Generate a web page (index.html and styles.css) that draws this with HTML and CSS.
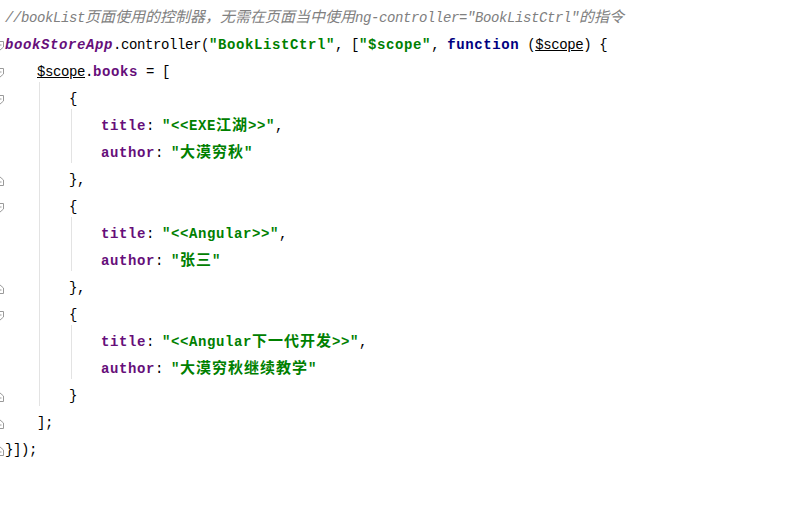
FILE: index.html
```html
<!DOCTYPE html>
<html lang="zh-CN">
<head>
    <meta charset="UTF-8">
    <meta name="viewport" content="width=device-width, initial-scale=1.0">
    <title>app.js</title>
    <link rel="stylesheet" href="styles.css">
</head>
<body>
    <div class="editor">
        <!-- line 1 -->
        <div class="ln">
            <span class="fold"></span>
            <span class="src"><span class="comment">//bookList<span class="cn">页面使用的控制器，无需在页面当中使用</span>ng-controller="BookListCtrl"<span class="cn">的指令</span></span></span>
        </div>
        <!-- line 2 -->
        <div class="ln">
            <span class="fold"><svg width="10" height="10" viewBox="0 0 10 10"><path class="fold-shape" d="M0.5 0.5H8.5V6L4.5 9.5L0.5 6Z"/><path class="fold-minus" d="M2.5 4H6.5"/></svg></span>
            <span class="src"><span class="global">bookStoreApp</span>.controller(<span class="str">"BookListCtrl"</span>, [<span class="str">"$scope"</span>, <span class="kw">function</span> (<span class="param">$scope</span>) {</span>
        </div>
        <!-- line 3 -->
        <div class="ln">
            <span class="fold"><svg width="10" height="10" viewBox="0 0 10 10"><path class="fold-shape" d="M0.5 0.5H8.5V6L4.5 9.5L0.5 6Z"/><path class="fold-minus" d="M2.5 4H6.5"/></svg></span>
            <span class="src">    <span class="param">$scope</span>.<span class="prop">books</span> = [</span>
        </div>

        <div class="block outer">
            <div class="ln">
                <span class="fold"><svg width="10" height="10" viewBox="0 0 10 10"><path class="fold-shape" d="M0.5 0.5H8.5V6L4.5 9.5L0.5 6Z"/><path class="fold-minus" d="M2.5 4H6.5"/></svg></span>
                <span class="src">        {</span>
            </div>
            <div class="block inner">
                <div class="ln">
                    <span class="fold"></span>
                    <span class="src">            <span class="prop">title</span>: <span class="str">"&lt;&lt;EXE<span class="cn">江湖</span>&gt;&gt;"</span>,</span>
                </div>
                <div class="ln">
                    <span class="fold"></span>
                    <span class="src">            <span class="prop">author</span>: <span class="str">"<span class="cn">大漠穷秋</span>"</span></span>
                </div>
            </div>
            <div class="ln">
                <span class="fold"><svg width="10" height="10" viewBox="0 0 10 10"><path class="fold-shape" d="M0.5 9.5H8.5V4L4.5 0.5L0.5 4Z"/><path class="fold-minus" d="M2.5 6H6.5"/></svg></span>
                <span class="src">        },</span>
            </div>

            <div class="ln">
                <span class="fold"><svg width="10" height="10" viewBox="0 0 10 10"><path class="fold-shape" d="M0.5 0.5H8.5V6L4.5 9.5L0.5 6Z"/><path class="fold-minus" d="M2.5 4H6.5"/></svg></span>
                <span class="src">        {</span>
            </div>
            <div class="block inner">
                <div class="ln">
                    <span class="fold"></span>
                    <span class="src">            <span class="prop">title</span>: <span class="str">"&lt;&lt;Angular&gt;&gt;"</span>,</span>
                </div>
                <div class="ln">
                    <span class="fold"></span>
                    <span class="src">            <span class="prop">author</span>: <span class="str">"<span class="cn">张三</span>"</span></span>
                </div>
            </div>
            <div class="ln">
                <span class="fold"><svg width="10" height="10" viewBox="0 0 10 10"><path class="fold-shape" d="M0.5 9.5H8.5V4L4.5 0.5L0.5 4Z"/><path class="fold-minus" d="M2.5 6H6.5"/></svg></span>
                <span class="src">        },</span>
            </div>

            <div class="ln">
                <span class="fold"><svg width="10" height="10" viewBox="0 0 10 10"><path class="fold-shape" d="M0.5 0.5H8.5V6L4.5 9.5L0.5 6Z"/><path class="fold-minus" d="M2.5 4H6.5"/></svg></span>
                <span class="src">        {</span>
            </div>
            <div class="block inner">
                <div class="ln">
                    <span class="fold"></span>
                    <span class="src">            <span class="prop">title</span>: <span class="str">"&lt;&lt;Angular<span class="cn">下一代开发</span>&gt;&gt;"</span>,</span>
                </div>
                <div class="ln">
                    <span class="fold"></span>
                    <span class="src">            <span class="prop">author</span>: <span class="str">"<span class="cn">大漠穷秋继续教学</span>"</span></span>
                </div>
            </div>
            <div class="ln">
                <span class="fold"><svg width="10" height="10" viewBox="0 0 10 10"><path class="fold-shape" d="M0.5 9.5H8.5V4L4.5 0.5L0.5 4Z"/><path class="fold-minus" d="M2.5 6H6.5"/></svg></span>
                <span class="src">        }</span>
            </div>
        </div>

        <div class="ln">
            <span class="fold"><svg width="10" height="10" viewBox="0 0 10 10"><path class="fold-shape" d="M0.5 9.5H8.5V4L4.5 0.5L0.5 4Z"/><path class="fold-minus" d="M2.5 6H6.5"/></svg></span>
            <span class="src">    ];</span>
        </div>
        <div class="ln">
            <span class="fold"><svg width="10" height="10" viewBox="0 0 10 10"><path class="fold-shape" d="M0.5 9.5H8.5V4L4.5 0.5L0.5 4Z"/><path class="fold-minus" d="M2.5 6H6.5"/></svg></span>
            <span class="src">}]);</span>
        </div>
    </div>
</body>
</html>
```

FILE: styles.css
```css
:root {
    --text-color: #000;
    --comment-color: #808080;
    --purple: #660e7a;
    --green: #008000;
    --navy: #000080;
    --guide-color: #e3e3e3;
    --fold-color: #9a9a9a;
}

body {
    margin: 0;
    padding: 0;
    background-color: #fff;
    color: var(--text-color);
}

.editor {
    padding-top: 5px;
    font-family: 'Liberation Mono', 'Noto Sans CJK SC', monospace;
    font-size: 14px;
    letter-spacing: -0.4px;
}

.ln {
    display: flex;
    align-items: center;
    height: 27px;
    line-height: 27px;
}

.fold {
    flex: none;
    display: flex;
    align-items: center;
    width: 5px;
    height: 27px;
    overflow: hidden;
}

.fold svg {
    flex: none;
    margin-left: -5px;
}

.fold-shape {
    fill: #fff;
    stroke: var(--fold-color);
    stroke-width: 1;
}

.fold-minus {
    stroke: var(--fold-color);
    stroke-width: 1;
}

.src {
    white-space: pre;
}

/* indent guides */
.block {
    position: relative;
}

.block::before {
    content: '';
    position: absolute;
    top: -4px;
    bottom: 4px;
    border-left: 1px solid var(--guide-color);
}

.block.outer::before {
    left: 39px;
}

.block.inner::before {
    left: 71px;
}

/* syntax colours */
.comment {
    color: var(--comment-color);
    font-style: italic;
}

.cn {
    font-family: 'Noto Sans CJK SC', sans-serif;
    font-size: 15px;
    line-height: 1;
    letter-spacing: 0;
}

.global {
    color: var(--purple);
    font-weight: bold;
    font-style: italic;
    letter-spacing: 0.6px;
}

.prop {
    color: var(--purple);
    font-weight: bold;
    letter-spacing: 0.6px;
}

.str {
    color: var(--green);
    font-weight: bold;
    letter-spacing: 0.6px;
}

.str .cn {
    letter-spacing: 1px;
}

.kw {
    color: var(--navy);
    font-weight: bold;
    letter-spacing: 0.6px;
}

.param {
    text-decoration: underline;
}
```
